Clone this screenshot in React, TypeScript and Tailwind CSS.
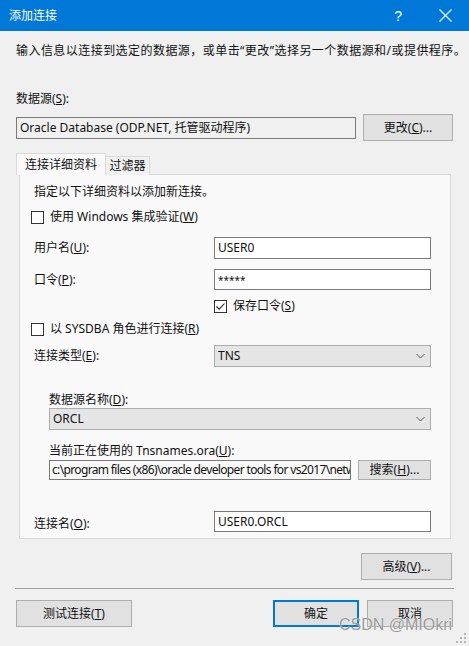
import React from "react";

const F = { fontFamily: '"Noto Sans", "Noto Sans CJK SC", sans-serif' };

function Check({ checked = false }: { checked?: boolean }) {
  return (
    <div className="w-[13px] h-[13px] border border-[#333333] bg-white flex items-center justify-center shrink-0">
      {checked && (
        <svg width="11" height="11" viewBox="0 0 11 11">
          <path d="M1.5 5.5 L4.2 8.2 L9.5 2.5" fill="none" stroke="#222" strokeWidth="1.1" />
        </svg>
      )}
    </div>
  );
}

function Chevron() {
  return (
    <svg width="9" height="6" viewBox="0 0 9 6" className="shrink-0">
      <path d="M0.5 1 L4.5 5 L8.5 1" fill="none" stroke="#555" strokeWidth="1" />
    </svg>
  );
}

function Btn({ children, w, h = 27, primary = false }: { children: React.ReactNode; w: string; h?: number; primary?: boolean }) {
  return (
    <div
      className={
        "flex items-center justify-center bg-[#e1e1e1] text-[12px] text-[#111] " +
        w +
        (primary ? " border-2 border-[#0078d7]" : " border border-[#adadad]")
      }
      style={{ height: h }}
    >
      {children}
    </div>
  );
}

export default function App() {
  return (
    <div className="w-[469px] h-[646px] bg-[#f0f0f0] relative overflow-hidden text-[12px] leading-[14px] text-[#111]" style={F}>
      {/* title bar */}
      <div className="h-[31px] bg-[#0078d7] flex items-center pl-[9px] text-white text-[12px]">
        <span>添加连接</span>
        <div className="ml-auto flex items-center">
          <span className="text-[14px] mr-[37px]" style={{ fontFamily: '"Liberation Sans", sans-serif' }}>?</span>
          <svg width="13" height="13" viewBox="0 0 13 13" className="mr-[17px]">
            <path d="M0.5 0.5 L12.5 12.5 M12.5 0.5 L0.5 12.5" stroke="white" strokeWidth="1.1" />
          </svg>
        </div>
      </div>

      <div className="px-[16px]">
        <div className="mt-[13px] whitespace-nowrap tracking-[0.45px]">输入信息以连接到选定的数据源，或单击“更改”选择另一个数据源和/或提供程序。</div>
        <div className="mt-[34px]">
          数据源(<u>S</u>):
        </div>
        <div className="mt-[8px] flex items-start">
          <div className="w-[341px] h-[22px] mt-[3px] border border-[#7a7a7a] bg-[#f0f0f0] flex items-center pl-[3px] whitespace-nowrap">
            Oracle Database (ODP.NET, 托管驱动程序)
          </div>
          <div className="ml-[7px]">
            <Btn w="w-[90px]">
              更改(<u>C</u>)...
            </Btn>
          </div>
        </div>

        {/* tabs */}
        <div className="mt-[12px] flex items-end h-[22px] relative z-10">
          <div className="h-[22px] w-[90px] bg-[#f9f9f9] border border-b-0 border-[#d9d9d9] flex items-center justify-center">连接详细资料</div>
          <div className="h-[19px] w-[44px] bg-[#f0f0f0] border border-b-0 border-l-0 border-[#d9d9d9] flex items-center justify-center">过滤器</div>
        </div>
      </div>

      {/* tab panel */}
      <div className="ml-[19px] w-[432px] h-[365px] -mt-[1px] border border-[#d9d9d9] bg-[#f9f9f9] pl-[11px] pr-[19px]">
        <div className="mt-[10px] pl-[3px]">指定以下详细资料以添加新连接。</div>
        <div className="mt-[11px] flex items-center h-[14px]">
          <Check />
          <span className="ml-[6px]">使用 Windows 集成验证(<u>W</u>)</span>
        </div>
        <div className="mt-[13px] flex items-center h-[22px]">
          <span className="pl-[3px] w-[183px]">用户名(<u>U</u>):</span>
          <div className="w-[217px] h-[22px] border border-[#7a7a7a] bg-white flex items-center pl-[3px]">USER0</div>
        </div>
        <div className="mt-[10px] flex items-center h-[21px]">
          <span className="pl-[3px] w-[183px]">口令(<u>P</u>):</span>
          <div className="w-[217px] h-[21px] border border-[#7a7a7a] bg-white flex items-center pl-[3px] text-[10px]">*****</div>
        </div>
        <div className="mt-[9px] flex items-center h-[14px] pl-[183px]">
          <Check checked />
          <span className="ml-[6px]">保存口令(<u>S</u>)</span>
        </div>
        <div className="mt-[9px] flex items-center h-[14px]">
          <Check />
          <span className="ml-[6px]">以 SYSDBA 角色进行连接(<u>R</u>)</span>
        </div>
        <div className="mt-[9px] flex items-center h-[22px]">
          <span className="pl-[3px] w-[183px]">连接类型(<u>E</u>):</span>
          <div className="w-[217px] h-[22px] border border-[#adadad] bg-[#e5e5e5] flex items-center pl-[3px] pr-[5px]">
            <span>TNS</span>
            <span className="ml-auto"><Chevron /></span>
          </div>
        </div>
        <div className="pl-[18px]">
          <div className="mt-[26px]">数据源名称(<u>D</u>):</div>
          <div className="mt-[1px] w-[382px] h-[22px] border border-[#adadad] bg-[#e5e5e5] flex items-center pl-[3px] pr-[5px]">
            <span>ORCL</span>
            <span className="ml-auto"><Chevron /></span>
          </div>
          <div className="mt-[14px]">当前正在使用的 Tnsnames.ora(<u>U</u>):</div>
          <div className="mt-[2px] flex items-center h-[20px]">
            <div className="w-[302px] h-[20px] border border-[#7a7a7a] bg-[#f9f9f9] flex items-center pl-[2px] whitespace-nowrap overflow-hidden">
              <span className="tracking-[-0.65px]">c:\program files (x86)\oracle developer tools for vs2017\netw</span>
            </div>
            <div className="ml-[7px]">
              <Btn w="w-[73px]" h={20}>
                搜索(<u>H</u>)...
              </Btn>
            </div>
          </div>
        </div>
        <div className="mt-[31px] flex items-center h-[21px]">
          <span className="pl-[3px] w-[183px] mt-[4px]">连接名(<u>O</u>):</span>
          <div className="w-[217px] h-[21px] border border-[#7a7a7a] bg-white flex items-center pl-[3px]">USER0.ORCL</div>
        </div>
      </div>

      <div className="flex justify-end pr-[17px] mt-[14px]">
        <Btn w="w-[91px]">
          高级(<u>V</u>)...
        </Btn>
      </div>
      <div className="mx-[15px] mt-[8px] h-px bg-[#a0a0a0]" />
      <div className="flex items-center px-[16px] mt-[11px]">
        <Btn w="w-[116px]">
          测试连接(<u>T</u>)
        </Btn>
        <div className="ml-auto flex gap-[8px]">
          <Btn w="w-[86px]" primary>
            确定
          </Btn>
          <Btn w="w-[86px]">取消</Btn>
        </div>
      </div>

      {/* watermark */}
      <div
        className="absolute left-[339px] top-[616px] text-[16px] leading-[18px] text-[#7f7f7f]/80"
        style={{ fontFamily: '"Liberation Sans", sans-serif', textShadow: "0 0 1px #ffffff" }}
      >
        CSDN @MIOkri
      </div>
      {/* resize grip */}
      <svg className="absolute right-[3px] bottom-[3px]" width="11" height="11" viewBox="0 0 11 11">
        {[
          [9, 1], [9, 5], [5, 5], [9, 9], [5, 9], [1, 9],
        ].map(([x, y], i) => (
          <rect key={i} x={x} y={y} width="2" height="2" fill="#b5b5b5" />
        ))}
      </svg>
    </div>
  );
}
